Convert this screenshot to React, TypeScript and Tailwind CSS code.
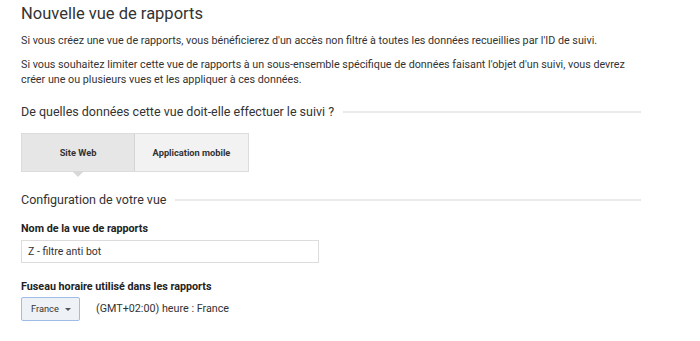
export default function App() {
  return (
    <div className="w-[700px] h-[341px] bg-white overflow-hidden pl-[21px] font-['Roboto',sans-serif] text-[#333]">
      {/* Titre */}
      <h1 className="pt-[3px] text-[16.5px] leading-[22px] text-[#333]">Nouvelle vue de rapports</h1>

      <p className="mt-[8px] text-[10.75px] leading-[15px] text-[#333]">
        Si vous créez une vue de rapports, vous bénéficierez d'un accès non filtré à toutes les données recueillies par l'ID de suivi.
      </p>
      <p className="mt-[9px] w-[610px] text-[10.75px] leading-[15px] text-[#333]">
        Si vous souhaitez limiter cette vue de rapports à un sous-ensemble spécifique de données faisant l'objet d'un suivi, vous devrez créer une ou plusieurs vues et les appliquer à ces données.
      </p>

      {/* Type de données */}
      <SectionHeading title="De quelles données cette vue doit-elle effectuer le suivi ?" className="mt-[16px]" />

      <div className="mt-[12px] flex w-[228px] h-[39px] border border-[#dcdcdc] text-[9.25px] font-bold text-[#333]">
        <div className="relative w-[113px] flex items-center justify-center bg-[#e6e6e6] border-r border-[#d4d4d4]">
          Site Web
          <span className="absolute left-1/2 -translate-x-1/2 top-full w-0 h-0 border-l-[6px] border-r-[6px] border-t-[6px] border-l-transparent border-r-transparent border-t-[#d8d8d8]" />
        </div>
        <div className="flex-1 flex items-center justify-center bg-[#f2f2f2]">Application mobile</div>
      </div>

      {/* Configuration */}
      <SectionHeading title="Configuration de votre vue" className="mt-[19px]" />

      <div className="mt-[12px] text-[10.75px] font-bold leading-[16px] text-[#222]">Nom de la vue de rapports</div>
      <div className="mt-[3px] w-[298px] h-[23px] border border-[#dcdcdc] flex items-center pl-[6px] text-[10.5px] text-[#333]">
        Z - filtre anti bot
      </div>

      <div className="mt-[16px] text-[10.75px] font-bold leading-[16px] text-[#222]">Fuseau horaire utilisé dans les rapports</div>
      <div className="mt-[2px] flex items-center">
        <div className="w-[59px] h-[24px] rounded-[2px] border border-[#9fbce6] bg-[#eef1f5] flex items-center pl-[9px] gap-[6px] text-[9.25px] text-[#333]">
          France
          <span className="w-0 h-0 border-l-[3px] border-r-[3px] border-t-[3px] border-l-transparent border-r-transparent border-t-[#555]" />
        </div>
        <span className="ml-[16px] text-[10.75px] text-[#333]">(GMT+02:00) heure : France</span>
      </div>
    </div>
  );
}

function SectionHeading({ title, className = '' }: { title: string; className?: string }) {
  return (
    <div className={`flex items-center w-[620px] ${className}`}>
      <span className="text-[12.5px] leading-[18px] text-[#333] whitespace-nowrap">{title}</span>
      <span className="ml-[9px] flex-1 h-[2px] bg-[#ebebeb]" />
    </div>
  );
}
